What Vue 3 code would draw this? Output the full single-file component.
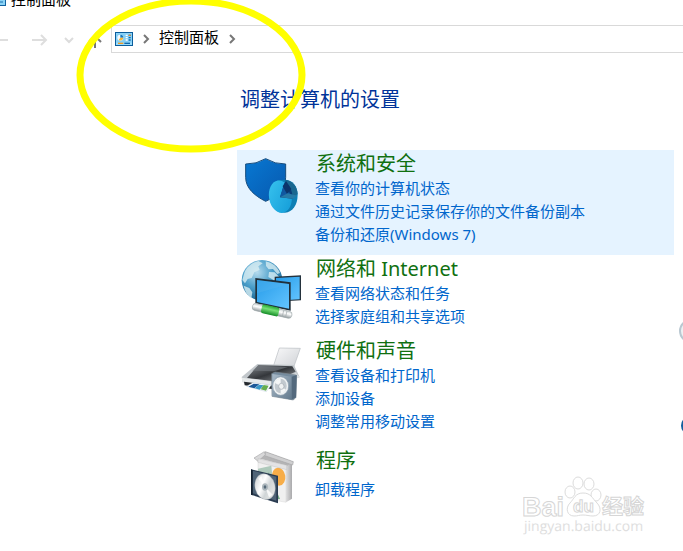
<script setup>
const categories = [
  {
    id: 'security',
    title: '系统和安全',
    links: ['查看你的计算机状态', '通过文件历史记录保存你的文件备份副本', '备份和还原(Windows 7)'],
    active: true,
  },
  { id: 'network', title: '网络和 Internet', links: ['查看网络状态和任务', '选择家庭组和共享选项'] },
  { id: 'hardware', title: '硬件和声音', links: ['查看设备和打印机', '添加设备', '调整常用移动设置'] },
  { id: 'programs', title: '程序', links: ['卸载程序'], roomy: true },
]
</script>

<template>
  <div class="window">
    <header class="titlebar">
      <svg class="title-icon" viewBox="0 0 18 14" aria-hidden="true">
        <rect x="0.5" y="0.5" width="17" height="13" fill="#8ad4f7" stroke="#12629f" />
        <path d="M11 4h4M11 7h4M11 10h4" stroke="#1b6fae" />
      </svg>
      <span>控制面板</span>
    </header>

    <nav class="toolbar">
      <div class="history">
        <button type="button" class="nav-btn back" aria-label="后退">
          <svg width="16" height="12" viewBox="0 0 16 12"><path d="M16 6H2M7 1L2 6l5 5" fill="none" stroke="#dedede" stroke-width="2" /></svg>
        </button>
        <button type="button" class="nav-btn forward" aria-label="前进">
          <svg width="16" height="12" viewBox="0 0 16 12"><path d="M0 6h14M9 1l5 5-5 5" fill="none" stroke="#dedede" stroke-width="2" /></svg>
        </button>
        <button type="button" class="nav-btn recent" aria-label="最近浏览的位置">
          <svg width="10" height="8" viewBox="0 0 10 8"><path d="M1 2l4 4 4-4" fill="none" stroke="#dcdcdc" stroke-width="2" /></svg>
        </button>
        <button type="button" class="nav-btn up" aria-label="向上">
          <svg width="14" height="16" viewBox="0 0 14 16"><path d="M7 16V4M1 10l6-6 6 6" fill="none" stroke="#777" stroke-width="2" /></svg>
        </button>
      </div>
      <div class="address">
        <svg width="18" height="14" viewBox="0 0 54 42" aria-hidden="true">
          <rect x="1.5" y="1.5" width="51" height="39" fill="#9adcfb" stroke="#0b5d9c" stroke-width="3" />
          <path d="M4 4h46v28H4z" fill="#83cef5" />
          <circle cx="16" cy="17" r="9" fill="#f6fbff" />
          <path d="M16 17V8a9 9 0 0 1 9 9z" fill="#1379c2" />
          <path d="M16 17h9a9 9 0 0 1-14 7z" fill="#f6b437" />
          <path d="M32 10h6M32 17h6M32 24h6" stroke="#fff" stroke-width="4" />
          <path d="M41 10h6M41 17h6M41 24h6" stroke="#1268aa" stroke-width="4" />
          <path d="M41 10h6" stroke="#e88a28" stroke-width="4" />
          <path d="M9 34h16" stroke="#f19a24" stroke-width="4" />
          <path d="M28 34h17" stroke="#1268aa" stroke-width="4" />
        </svg>
        <svg class="crumb-arrow" width="8" height="10" viewBox="0 0 8 10" aria-hidden="true"><path d="M2 1l4 4-4 4" fill="none" stroke="#777" stroke-width="2" /></svg>
        <a href="#" class="crumb">控制面板</a>
        <svg class="crumb-arrow" width="8" height="10" viewBox="0 0 8 10" aria-hidden="true"><path d="M2 1l4 4-4 4" fill="none" stroke="#777" stroke-width="2" /></svg>
      </div>
    </nav>

    <main class="content">
      <h1>调整计算机的设置</h1>
      <section
        v-for="item in categories"
        :key="item.id"
        class="category"
        :class="{ active: item.active, roomy: item.roomy }"
      >
        <svg v-if="item.id === 'security'" class="icon" viewBox="15 15 234 204" aria-hidden="true">
          <defs>
            <linearGradient id="shield" x1="0" y1="0" x2="1" y2="1">
              <stop offset="0" stop-color="#0878d2" /><stop offset="1" stop-color="#0758ae" />
            </linearGradient>
            <linearGradient id="pie" x1="0" y1="0" x2="1" y2="1">
              <stop offset="0" stop-color="#38c3ef" /><stop offset="1" stop-color="#139bd7" />
            </linearGradient>
          </defs>
          <path d="M41 57q32 1 60-16 28 17 60 16v40c0 32-27 58-60 72-34-17-60-40-60-72z" fill="url(#shield)" stroke="#174c7d" stroke-width="3" />
          <path d="M136 106l22-2c24 0 39 20 39 45 0 30-15 52-38 54l-18-1z" fill="#0d7fb5" />
          <path d="M158 104c21 1 38 19 39 43l-18 12-13-40z" fill="#1a6790" />
          <ellipse cx="145" cy="155" rx="34" ry="49" transform="rotate(-9 145 155)" fill="url(#pie)" />
          <path d="M144 157l15-46c13 8 23 27 23 50z" fill="#0c3d78" />
          <path d="M144 157l10-34 8-4 12 28z" fill="#1058a0" />
          <path d="M152 124l10-16 16 24-13 15z" fill="#0b356b" />
          <path d="M144 157l38 4 14-9-29-7z" fill="#277aa6" />
        </svg>

        <svg v-else-if="item.id === 'network'" class="icon" viewBox="15 15 234 204" aria-hidden="true">
          <defs>
            <radialGradient id="globe" cx="0.38" cy="0.3" r="0.75">
              <stop offset="0" stop-color="#b5dbed" /><stop offset="0.5" stop-color="#4b9fca" /><stop offset="1" stop-color="#17618f" />
            </radialGradient>
            <linearGradient id="screen" x1="0" y1="0" x2="1" y2="1">
              <stop offset="0" stop-color="#269ce9" /><stop offset="1" stop-color="#63c4ff" />
            </linearGradient>
            <linearGradient id="plug" x1="0" y1="0" x2="0" y2="1">
              <stop offset="0" stop-color="#cfd6d8" /><stop offset="0.4" stop-color="#fff" /><stop offset="1" stop-color="#929b9e" />
            </linearGradient>
            <linearGradient id="cable" x1="0" y1="0" x2="0" y2="1">
              <stop offset="0" stop-color="#22a632" /><stop offset="0.4" stop-color="#78df77" /><stop offset="1" stop-color="#138b26" />
            </linearGradient>
          </defs>
          <circle cx="90" cy="91" r="61" fill="url(#globe)" />
          <path d="M37 69c8-20 23-30 42-36l13 7-13 9 4 11-16 7-8 17-12 3-8 13-8-10zM101 34c20 4 36 17 43 35l-8 3-13-15-13 1-8-10zM35 107l17 7 9 13-3 18c-12-9-20-22-23-38zM111 66l17 1 16 16-18 8-17-10z" fill="#d8edf3" opacity="0.8" />
          <path d="M128 80l79-4v75l-79 4z" fill="#24323d" />
          <path d="M132 84l71-4v68l-71 4z" fill="url(#screen)" />
          <path d="M70 84l106 13v85L70 160z" fill="#20303b" />
          <path d="M75 90l96 12v74l-96-20z" fill="url(#screen)" />
          <path d="M75 90l96 12-96 28z" fill="#59b5ef" opacity="0.35" />
          <g transform="rotate(13 120 182)">
            <rect x="60" y="172" width="121" height="21" rx="9" fill="url(#plug)" stroke="#a1aaac" stroke-width="2" />
            <rect x="88" y="169" width="53" height="27" rx="6" fill="url(#cable)" />
            <path d="M154 173v20M164 173v20" stroke="#a2abad" stroke-width="2" />
          </g>
        </svg>

        <svg v-else-if="item.id === 'hardware'" class="icon" viewBox="15 6 234 204" aria-hidden="true">
          <defs>
            <linearGradient id="paper" x1="0" y1="0" x2="1" y2="1">
              <stop offset="0" stop-color="#f9f9fa" /><stop offset="1" stop-color="#cdd0d4" />
            </linearGradient>
            <linearGradient id="printer" x1="0" y1="0" x2="1" y2="1">
              <stop offset="0" stop-color="#858a8f" /><stop offset="0.5" stop-color="#34373b" /><stop offset="1" stop-color="#969ba0" />
            </linearGradient>
            <linearGradient id="speaker" x1="0" y1="0" x2="1" y2="1">
              <stop offset="0" stop-color="#a9bac9" /><stop offset="1" stop-color="#62798c" />
            </linearGradient>
          </defs>
          <path d="M142 39l63 1-22 62-59-8z" fill="url(#paper)" stroke="#b8bcc1" stroke-width="2" />
          <path d="M29 126l47-39 110 3 17 37-75 26-96-11z" fill="#c2c7cb" />
          <path d="M79 90l102 4 10 16-65 29-81-10z" fill="url(#printer)" />
          <path d="M77 93l91 3-43 13-64-2z" fill="#747a80" opacity="0.6" />
          <path d="M29 128l96 12 67-25 10 11-72 33-98-17z" fill="#e7eaeb" />
          <path d="M36 140l89 12v11l-87-12z" fill="#25292e" />
          <path d="M62 143l56 7-15 20-59-16z" fill="#fafcff" stroke="#a7bdcc" stroke-width="1" />
          <path d="M65 146l17 2-15 12-18-5z" fill="#1b5797" />
          <path d="M81 149l14 2-12 13-15-4z" fill="#3997c7" />
          <path d="M95 150l15 2-8 15-16-4z" fill="#66ad4e" />
          <path d="M119 116l10-5 65 9-2 67-8 8-64-11z" fill="#758b9e" stroke="#7d8992" stroke-width="2" />
          <path d="M121 117l58 8v69l-59-11z" fill="url(#speaker)" />
          <path d="M179 125l15-5-2 67-13 7z" fill="#53697d" />
          <ellipse cx="146" cy="153" rx="24" ry="28" fill="#eef1f3" stroke="#8194a4" stroke-width="2" />
          <ellipse cx="146" cy="153" rx="18" ry="22" fill="#c2c9cf" />
          <path d="M146 153l-17-9c4-11 10-13 17-13zM146 153l16 11c-4 8-9 11-16 11z" fill="#f4f6f7" />
          <ellipse cx="148" cy="154" rx="8" ry="9" fill="#eff1f2" stroke="#a0a8af" stroke-width="2" />
        </svg>

        <svg v-else class="icon" viewBox="15 6 234 204" aria-hidden="true">
          <defs>
            <linearGradient id="disc" x1="0" y1="0" x2="1" y2="1">
              <stop offset="0" stop-color="#bfc4c7" /><stop offset="0.4" stop-color="#fff" /><stop offset="0.6" stop-color="#d0d5d7" /><stop offset="1" stop-color="#f1f1ee" />
            </linearGradient>
            <linearGradient id="box-side" x1="0" y1="0" x2="1" y2="0">
              <stop offset="0" stop-color="#dededf" /><stop offset="1" stop-color="#aaaaac" />
            </linearGradient>
          </defs>
          <path d="M78 56l84 20v111l-84-16z" fill="#f0f0f0" stroke="#c9c9c9" stroke-width="1" />
          <path d="M162 76l18-8v108l-18 11z" fill="url(#box-side)" />
          <path d="M78 86l40-9 9 94-49-16z" fill="#aec9bb" />
          <path d="M108 96l36 81-30 3z" fill="#72a984" />
          <ellipse cx="140" cy="110" rx="20" ry="27" transform="rotate(-8 140 110)" fill="#f7ad48" />
          <path d="M80 55l20-20 84 30-18 12z" fill="#b4b4b5" />
          <path d="M100 35l84 30-2 10-84-28z" fill="#cfcfd0" stroke="#a6a6a7" stroke-width="2" />
          <path d="M66 54l31-19 3 9-22 20z" fill="#d8d8d9" stroke="#a9a9aa" stroke-width="2" />
          <path d="M78 56l86 20v13l-86-22z" fill="#e3e3e4" stroke="#b3b3b4" stroke-width="1" />
          <path d="M57 88l81 19v83l-81-26z" fill="#293b50" />
          <path d="M62 92l71 18v72l-71-22z" fill="#506477" />
          <path d="M57 88l5 2v76l-5-2z" fill="#14212f" />
          <ellipse cx="99" cy="140" rx="30" ry="39" transform="rotate(-14 99 140)" fill="url(#disc)" stroke="#a5adb2" stroke-width="1" />
          <path d="M99 140L79 116l9-8zM99 140l23 24-11 8z" fill="#fff" opacity="0.8" />
          <ellipse cx="99" cy="141" rx="9" ry="11" fill="#adb7bd" />
          <ellipse cx="99" cy="141" rx="4" ry="5" fill="#566a79" />
        </svg>

        <div class="text">
          <h2><a href="#">{{ item.title }}</a></h2>
          <ul>
            <li v-for="link in item.links" :key="link"><a href="#">{{ link }}</a></li>
          </ul>
        </div>
      </section>
    </main>

    <svg class="highlight" width="232" height="160" viewBox="0 0 232 160" aria-hidden="true">
      <ellipse cx="116" cy="80" rx="111" ry="74" fill="none" stroke="#ff0" stroke-width="7" />
    </svg>
    <span class="edge-ring"></span>
    <span class="edge-dot"></span>

    <svg class="watermark" width="134" height="66" viewBox="0 0 134 66">
      <g fill="#fff" stroke="#dcdcdc" stroke-width="1">
        <ellipse cx="47" cy="19" rx="5" ry="6" />
        <ellipse cx="55" cy="10" rx="5" ry="6" />
        <ellipse cx="66" cy="11" rx="5" ry="6" />
        <ellipse cx="73" cy="22" rx="5" ry="6" />
        <path d="M60 20c-8 0-9 6-13 10-5 5-3 13 4 13 4 0 5-1 9-1s6 1 10 1c8 0 9-8 4-13s-6-10-14-10z" />
      </g>
      <g class="mark" text-rendering="geometricPrecision">
        <text x="-1" y="43" font-size="27">Bai</text>
        <text x="50" y="39" font-size="17">du</text>
        <text x="79" y="41" font-size="21">经验</text>
        <text x="1" y="58" font-size="14" class="domain">jingyan.baidu.com</text>
      </g>
    </svg>
  </div>
</template>

<style>
body {
  margin: 0;
  background: #fff;
}
</style>

<style scoped>
.window {
  position: relative;
  min-height: 100vh;
  overflow: hidden;
  background: #fff;
  color: #000;
  font-family: "Noto Sans", "Noto Sans CJK SC", sans-serif;
  font-size: 15px;
}
a {
  color: inherit;
  text-decoration: none;
}
.titlebar {
  display: flex;
  align-items: flex-end;
  gap: 5px;
  height: 9px;
  margin-left: -12px;
  overflow: hidden;
  line-height: 20px;
}
.title-icon {
  width: 18px;
  height: 14px;
  padding-bottom: 3px;
}
.toolbar {
  display: flex;
  margin-top: 16px;
}
.history {
  display: flex;
  align-items: center;
  width: 111px;
  flex: none;
  padding-top: 2px;
}
.nav-btn {
  display: flex;
  padding: 0;
  border: 0;
  background: none;
}
.back {
  margin-left: -8px;
}
.forward {
  margin-left: 24px;
}
.recent {
  margin-left: 16px;
}
.up {
  margin-left: 14px;
}
.address {
  display: flex;
  flex: 1;
  align-items: center;
  height: 26px;
  padding-left: 3px;
  border: 1px solid #d9d9d9;
  border-right: 0;
}
.crumb {
  padding-bottom: 4px;
  line-height: 20px;
}
.crumb-arrow {
  margin: 0 9px;
}
.content {
  margin: 0 9px 0 237px;
}
h1 {
  margin: 0;
  padding: 32px 0 36px 3px;
  color: #003399;
  font-size: 20px;
  font-weight: 400;
  line-height: 29px;
}
.category {
  display: flex;
  align-items: flex-start;
  padding-bottom: 9px;
}
.active {
  background: #e5f3ff;
}
.icon {
  flex: none;
  width: 78px;
  height: 68px;
}
.text {
  min-width: 0;
}
h2 {
  margin: 0;
  padding-left: 1px;
  color: #107010;
  font-size: 20px;
  font-weight: 400;
  line-height: 27px;
}
ul {
  margin: 0;
  padding: 0;
  list-style: none;
}
li {
  color: #0066cc;
  line-height: 23px;
}
.roomy .text {
  display: grid;
  gap: 4px;
  padding-top: 5px;
}
.highlight {
  position: absolute;
  top: -5px;
  left: 75px;
}
.edge-ring,
.edge-dot {
  position: absolute;
  box-sizing: border-box;
  border-radius: 50%;
}
.edge-ring {
  top: 319px;
  right: -20px;
  width: 24px;
  height: 24px;
  border: 2px solid #b9c8d1;
  background: #edf1f3;
}
.edge-dot {
  top: 417px;
  right: -14px;
  width: 16px;
  height: 17px;
  background: #125f9e;
}
.watermark {
  position: absolute;
  right: 26px;
  bottom: 12px;
}
.mark {
  fill: #fff;
  stroke: #d6d6d6;
  stroke-width: 1px;
  font-family: "Liberation Sans", "Noto Sans CJK SC", sans-serif;
  font-weight: 700;
}
.domain {
  fill: #dedede;
  stroke: none;
  font-family: "Open Sans", sans-serif;
  font-weight: 400;
}
</style>
